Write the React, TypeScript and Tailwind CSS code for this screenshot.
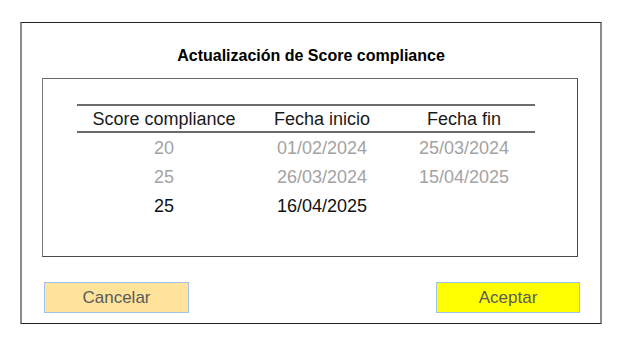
import React from "react";

type rowProps = {
  score: string;
  inicio: string;
  fin: string;
  muted?: boolean;
};

const rows: rowProps[] = [
  { score: "20", inicio: "01/02/2024", fin: "25/03/2024", muted: true },
  { score: "25", inicio: "26/03/2024", fin: "15/04/2025", muted: true },
  { score: "25", inicio: "16/04/2025", fin: "" },
];

const Row = ({ score, inicio, fin, muted }: rowProps) => {
  return (
    <div
      className={`flex h-[29px] items-center text-[18px] leading-none ${
        muted ? "text-[#a3a3a3]" : "text-[#111]"
      }`}
    >
      <div className="w-[174px] text-center">{score}</div>
      <div className="w-[142px] text-center">{inicio}</div>
      <div className="w-[142px] text-center">{fin}</div>
    </div>
  );
};

const App = () => {
  return (
    <div className="h-[348px] w-[628px] overflow-hidden bg-white pt-[22px] font-['Liberation_Sans',Arial,sans-serif]">
      <div className="ml-[20px] flex h-[302px] w-[582px] flex-col border-x-2 border-y border-x-[#8c8c8c] border-y-[#222]">
        <h1 className="mt-[24px] text-center text-[16px] font-bold leading-[18px] text-black">
          Actualización de Score compliance
        </h1>

        <div className="ml-[20px] mt-[13px] h-[179px] w-[536px] border border-[#4a4a4a] border-l-[#777] border-t-[#666]">
          <div className="ml-[34px] mt-[25px] w-[458px]">
            <div className="flex h-[29px] items-center border-y-2 border-[#6b6b6b] text-[18px] leading-none text-[#1a1a1a]">
              <div className="w-[174px] text-center">Score compliance</div>
              <div className="w-[142px] text-center">Fecha inicio</div>
              <div className="w-[142px] text-center">Fecha fin</div>
            </div>
            {rows.map((r, i) => (
              <Row key={i} {...r} />
            ))}
          </div>
        </div>

        <div className="mt-[25px] flex justify-between pl-[22px] pr-[20px]">
          <button className="h-[31px] w-[145px] border border-[#9fc3ea] bg-[#ffe39b] text-[17px] text-[#5a5a5a]">
            Cancelar
          </button>
          <button className="h-[31px] w-[144px] border border-[#9fc3ea] bg-[#ffff00] text-[17px] text-[#5a5a5a]">
            Aceptar
          </button>
        </div>
      </div>
    </div>
  );
};

export default App;
